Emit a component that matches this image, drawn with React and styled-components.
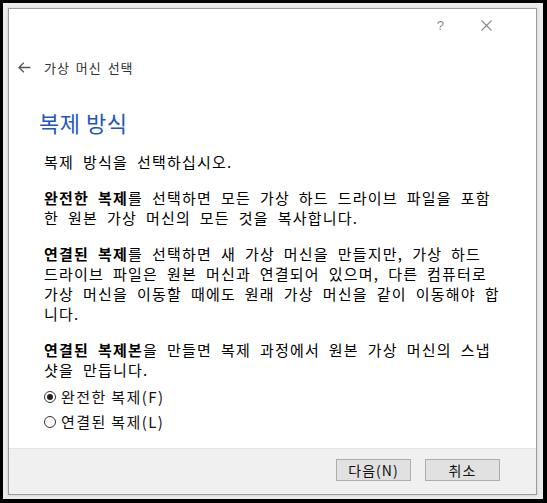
import React from 'react';
import styled, { createGlobalStyle } from 'styled-components';

const Global = createGlobalStyle`
  html, body { margin: 0; padding: 0; background: #fff; }
  * { box-sizing: border-box; }
`;

const KR = `"Noto Sans CJK KR", "Noto Sans", "Liberation Sans", sans-serif`;

function App() {
    return (
        <Frame>
            <Global />
            <Dialog>
                <TitleBar>
                    <Help>?</Help>
                    <Close>
                        <svg width="11" height="11" viewBox="0 0 11 11">
                            <path d="M0.5 0.5 L10.5 10.5 M10.5 0.5 L0.5 10.5" stroke="#8a8a8a" strokeWidth="1.1" fill="none" />
                        </svg>
                    </Close>
                </TitleBar>
                <Nav>
                    <svg width="13" height="11" viewBox="0 0 13 11">
                        <path d="M1 5.5 H12.5 M5.8 0.8 L1 5.5 L5.8 10.2" stroke="#555" strokeWidth="1.3" fill="none" />
                    </svg>
                    <span>가상 머신 선택</span>
                </Nav>
                <Heading>복제 방식</Heading>
                <Body>
                    <Para>
                        <Line>복제 방식을 선택하십시오.</Line>
                    </Para>
                    <Para>
                        <Line><b>완전한 복제</b>를 선택하면 모든 가상 하드 드라이브 파일을 포함</Line>
                        <Line>한 원본 가상 머신의 모든 것을 복사합니다.</Line>
                    </Para>
                    <Para>
                        <Line><b>연결된 복제</b>를 선택하면 새 가상 머신을 만들지만, 가상 하드</Line>
                        <Line>드라이브 파일은 원본 머신과 연결되어 있으며, 다른 컴퓨터로</Line>
                        <Line>가상 머신을 이동할 때에도 원래 가상 머신을 같이 이동해야 합</Line>
                        <Line>니다.</Line>
                    </Para>
                    <Para>
                        <Line><b>연결된 복제본</b>을 만들면 복제 과정에서 원본 가상 머신의 스냅</Line>
                        <Line>샷을 만듭니다.</Line>
                    </Para>
                </Body>
                <Radios>
                    <RadioRow>
                        <Dot checked />
                        <span>완전한 복제(F)</span>
                    </RadioRow>
                    <RadioRow>
                        <Dot />
                        <span>연결된 복제(L)</span>
                    </RadioRow>
                </Radios>
                <Footer>
                    <Button>다음(N)</Button>
                    <Button>취소</Button>
                </Footer>
            </Dialog>
        </Frame>
    )
}

export default App;

const Frame = styled.div`
width: 547px;
height: 503px;
border: 3px solid #000;
border-right-width: 4px;
border-bottom-width: 4px;
background: #ececec;
padding: 5px 6px 4px 5px;
`

const Dialog = styled.div`
height: 100%;
background: #fff;
border: 1px solid #9c9c9c;
box-shadow: 0 0 3px rgba(0,0,0,0.15);
display: flex;
flex-direction: column;
font-family: ${KR};
color: #000;
`

const TitleBar = styled.div`
height: 32px;
display: flex;
align-items: center;
justify-content: flex-end;
padding-right: 44px;
`

const Help = styled.span`
font-family: "Liberation Sans", sans-serif;
font-size: 13px;
color: #8a8a8a;
margin-right: 37px;
`

const Close = styled.span`
display: flex;
align-items: center;
`

const Nav = styled.div`
margin-top: 16px;
height: 20px;
display: flex;
align-items: center;
padding-left: 9px;
font-size: 13px;
letter-spacing: 1px;
word-spacing: 2px;
color: #333;
svg { margin-right: 13px; flex: none; }
`

const Heading = styled.h1`
margin: 31px 0 0 30px;
font-size: 22px;
line-height: 28px;
font-weight: 400;
letter-spacing: 0.5px;
color: #2456c0;
`

const Body = styled.div`
margin-top: 16px;
padding-left: 35px;
font-size: 15px;
line-height: 20px;
letter-spacing: 1.2px;
word-spacing: 4.4px;
display: flex;
flex-direction: column;
gap: 16px;
b { font-weight: 700; }
`

const Para = styled.div``

const Line = styled.div`
white-space: nowrap;
`

const Radios = styled.div`
margin-top: 4px;
padding-left: 30px;
`

const RadioRow = styled.div`
height: 25px;
display: flex;
align-items: center;
font-size: 15px;
letter-spacing: 1.4px;
color: #111;
span { margin-left: 5px; }
`

const Dot = styled.span`
flex: none;
width: 12px;
height: 12px;
border-radius: 50%;
border: 1px solid #333;
background: #fff;
display: flex;
align-items: center;
justify-content: center;
&::after {
    content: '';
    width: 6px;
    height: 6px;
    border-radius: 50%;
    background: ${p => p.checked ? '#222' : 'transparent'};
}
`

const Footer = styled.div`
margin-top: auto;
height: 46px;
background: #f0f0f0;
border-top: 1px solid #e4e4e4;
display: flex;
justify-content: flex-end;
align-items: flex-start;
gap: 14px;
padding: 10px 36px 0 0;
`

const Button = styled.button`
width: 75px;
height: 22px;
background: #e1e1e1;
border: 1px solid #adadad;
font-family: ${KR};
font-size: 14px;
letter-spacing: 1px;
color: #111;
padding: 0;
`
